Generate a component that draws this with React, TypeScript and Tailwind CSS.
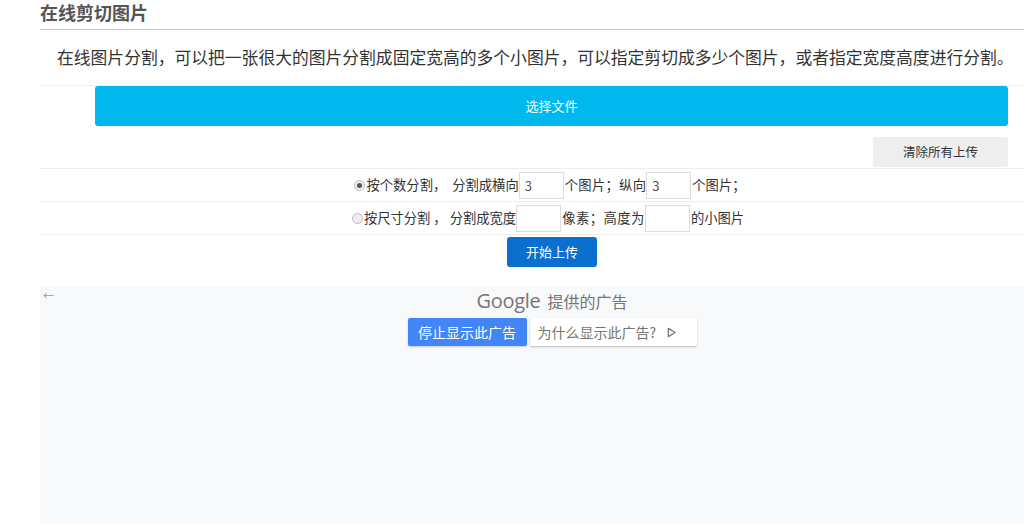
import { useState } from "react";

const font = {
  fontFamily: '"Noto Sans CJK SC", "Noto Sans", "Liberation Sans", sans-serif',
};

export default function App() {
  const [mode, setMode] = useState<"count" | "size">("count");

  return (
    <div className="min-h-screen bg-white" style={font}>
      <div className="ml-[40px]">
        {/* Title */}
        <div className="flex h-[30px] items-start border-b border-[#c4c4c4]">
          <h1 className="text-[18px] font-bold leading-[24px] text-[#555]">
            在线剪切图片
          </h1>
        </div>

        {/* Description */}
        <p className="h-[55px] pl-[17px] pt-[14px] text-[16.8px] leading-[26px] text-[#333]">
          在线图片分割，可以把一张很大的图片分割成固定宽高的多个小图片，可以指定剪切成多少个图片，或者指定宽度高度进行分割。
        </p>

        {/* Upload area */}
        <div className="border-t border-[#eee] pr-[16px] pl-[55px]">
          <button className="flex h-[40px] w-full items-center justify-center rounded-[3px] bg-[#00b7ee] text-[13px] text-white">
            选择文件
          </button>
          <div className="flex justify-end pt-[11px] pb-[1px]">
            <button className="h-[30px] w-[135px] rounded-[3px] bg-[#eee] text-[12.5px] text-[#333]">
              清除所有上传
            </button>
          </div>
        </div>

        {/* Options */}
        <div className="border-t border-[#eee] text-[13.3px] text-[#333]">
          <div className="flex h-[32px] items-center justify-center pl-[36px]">
            <label className="flex items-center">
              <span
                onClick={() => setMode("count")}
                className="mr-[1px] flex h-[11px] w-[11px] items-center justify-center rounded-full border border-[#bbb] bg-[#eee]"
              >
                {mode === "count" && (
                  <span className="h-[5px] w-[5px] rounded-full bg-[#555]" />
                )}
              </span>
              按个数分割，&nbsp;&nbsp;分割成横向
            </label>
            <input
              defaultValue="3"
              className="h-[27px] w-[45px] border border-[#ddd] px-[5px] text-[13px] text-[#555] outline-none"
            />
            <span className="ml-[1px] tracking-[0.3px]">个图片；纵向</span>
            <input
              defaultValue="3"
              className="h-[27px] w-[45px] border border-[#ddd] px-[5px] text-[13px] text-[#555] outline-none"
            />
            <span className="ml-[1px]">个图片；</span>
          </div>
          <div className="flex h-[33px] items-center justify-center border-t border-[#eee] pl-[32px]">
            <label className="flex items-center">
              <span
                onClick={() => setMode("size")}
                className="mr-[1px] flex h-[11px] w-[11px] items-center justify-center rounded-full border border-[#bbb] bg-[#eee]"
              >
                {mode === "size" && (
                  <span className="h-[5px] w-[5px] rounded-full bg-[#555]" />
                )}
              </span>
              按尺寸分割&nbsp;，&nbsp;分割成宽度
            </label>
            <input className="h-[27px] w-[45px] border border-[#ddd] px-[5px] text-[13px] outline-none" />
            <span className="ml-[1px] tracking-[0.5px]">像素；高度为</span>
            <input className="h-[27px] w-[45px] border border-[#ddd] px-[5px] text-[13px] outline-none" />
            <span className="ml-[1px]">的小图片</span>
          </div>
          <div className="flex justify-center border-t border-[#eee] pt-[2px] pl-[40px]">
            <button className="h-[30px] w-[90px] rounded-[3px] bg-[#0b6fcf] text-[13px] text-white">
              开始上传
            </button>
          </div>
        </div>

        {/* Ad area */}
        <div className="mt-[20px] h-[240px] bg-[#f8f9fa]">
          <div className="relative">
            <span className="absolute top-[0px] left-[3px] text-[11px] text-[#999]">
              ←
            </span>
          </div>
          <div className="flex flex-col items-center pt-[1px] pl-[40px]">
            <div className="flex h-[26px] items-center text-[#757575]">
              <span
                className="text-[20px] tracking-[-0.3px]"
                style={{ fontFamily: '"Open Sans", "Liberation Sans", sans-serif' }}
              >
                Google
              </span>
              <span className="ml-[7px] text-[16px]">提供的广告</span>
            </div>
            <div className="mt-[4px] flex gap-[3px]">
              <button className="h-[28px] w-[119px] rounded-[2px] bg-[#4285f4] text-[14px] text-white shadow-[0_1px_2px_rgba(0,0,0,0.2)]">
                停止显示此广告
              </button>
              <button className="flex h-[28px] w-[167px] items-center gap-[10px] rounded-[2px] bg-white pl-[8px] text-[14px] text-[#757575] shadow-[0_1px_2px_rgba(0,0,0,0.25)]">
                为什么显示此广告?
                <svg width="11" height="11" viewBox="0 0 12 12" fill="none">
                  <path
                    d="M2.5 1.5 L10 6 L2.5 10.5 Z"
                    stroke="#757575"
                    strokeWidth="1.4"
                    strokeLinejoin="round"
                  />
                </svg>
              </button>
            </div>
          </div>
        </div>
      </div>
    </div>
  );
}
